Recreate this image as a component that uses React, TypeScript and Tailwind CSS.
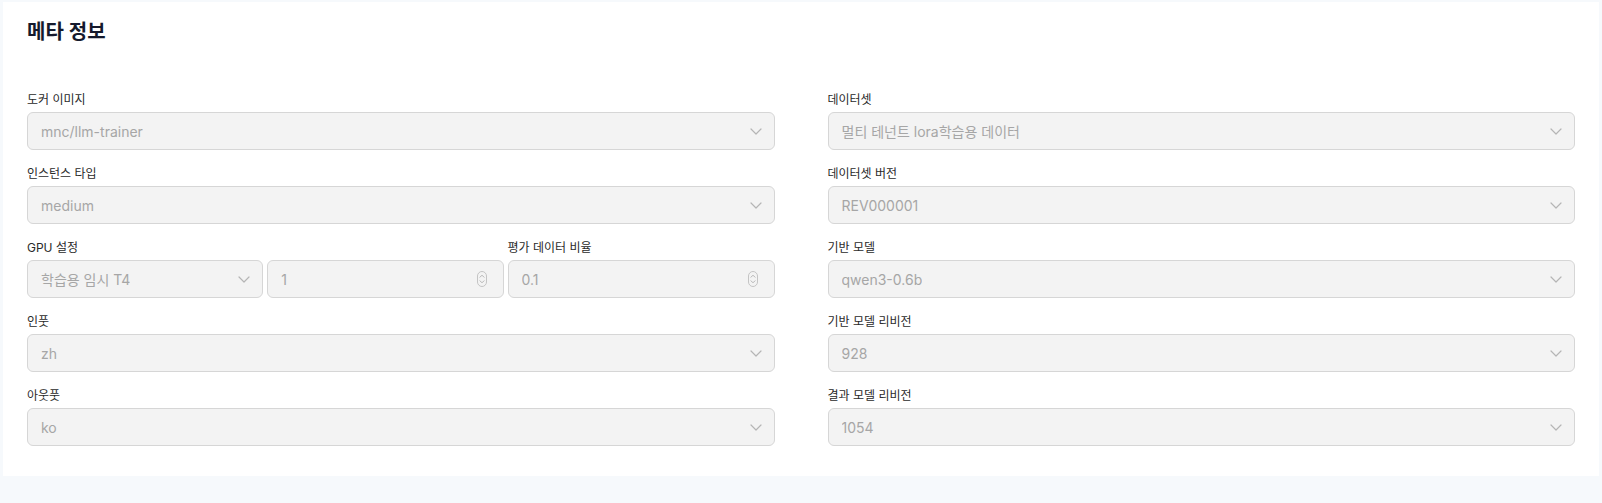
import React from "react";

const font = { fontFamily: 'Inter, "Noto Sans CJK KR", "Noto Sans", sans-serif' };

function Chevron() {
  return (
    <svg width="12" height="7" viewBox="0 0 12 7" fill="none" className="shrink-0">
      <path d="M1 1l5 5 5-5" stroke="#b5b5b5" strokeWidth="1.2" strokeLinecap="round" strokeLinejoin="round" />
    </svg>
  );
}

function Spin() {
  return (
    <svg width="10" height="16" viewBox="0 0 10 16" fill="none" className="shrink-0">
      <rect x="0.5" y="0.5" width="9" height="15" rx="4.5" stroke="#c4c4c4" strokeWidth="1" />
      <path d="M3 6.2l2-2 2 2" stroke="#b5b5b5" strokeWidth="1" strokeLinecap="round" strokeLinejoin="round" />
      <path d="M3 9.8l2 2 2-2" stroke="#b5b5b5" strokeWidth="1" strokeLinecap="round" strokeLinejoin="round" />
    </svg>
  );
}

function Box({ value, kind = "select" }: { value: string; kind?: "select" | "number" }) {
  return (
    <div className="flex h-[38px] items-center justify-between rounded-[6px] border border-[#d6d6d6] bg-[#f3f3f3] pl-[13px] pr-[12px]">
      <span className="text-[14px] text-[#a6a6a6] truncate">{value}</span>
      {kind === "select" ? <Chevron /> : <span className="pr-[4px]"><Spin /></span>}
    </div>
  );
}

function Label({ children }: { children: React.ReactNode }) {
  return <div className="mb-[2px] h-[20px] text-[12px] leading-[20px] text-[#2a2a2a]">{children}</div>;
}

function Field({ label, value }: { label: string; value: string }) {
  return (
    <div>
      <Label>{label}</Label>
      <Box value={value} />
    </div>
  );
}

export default function App() {
  return (
    <div className="h-[503px] w-[1602px] bg-[#f6f9fc] pl-[3px] pr-[3px] pt-[2px]" style={font}>
      <div className="bg-white px-[24px] pb-[30px] pt-[16px]">
        <h2 className="text-[20px] font-semibold leading-[28px] text-[#151a2d]">메타 정보</h2>
        <div className="mt-[44px] grid grid-cols-2 gap-x-[53px]">
          <div className="flex flex-col gap-y-[14px]">
            <Field label="도커 이미지" value="mnc/llm-trainer" />
            <Field label="인스턴스 타입" value="medium" />
            <div className="grid grid-cols-[1fr_1fr_267px] gap-x-[4px]">
              <div className="col-span-2">
                <Label>GPU 설정</Label>
                <div className="grid grid-cols-2 gap-x-[4px]">
                  <Box value="학습용 임시 T4" />
                  <Box value="1" kind="number" />
                </div>
              </div>
              <div>
                <Label>평가 데이터 비율</Label>
                <Box value="0.1" kind="number" />
              </div>
            </div>
            <Field label="인풋" value="zh" />
            <Field label="아웃풋" value="ko" />
          </div>
          <div className="flex flex-col gap-y-[14px]">
            <Field label="데이터셋" value="멀티 테넌트 lora학습용 데이터" />
            <Field label="데이터셋 버전" value="REV000001" />
            <Field label="기반 모델" value="qwen3-0.6b" />
            <Field label="기반 모델 리비전" value="928" />
            <Field label="결과 모델 리비전" value="1054" />
          </div>
        </div>
      </div>
    </div>
  );
}
